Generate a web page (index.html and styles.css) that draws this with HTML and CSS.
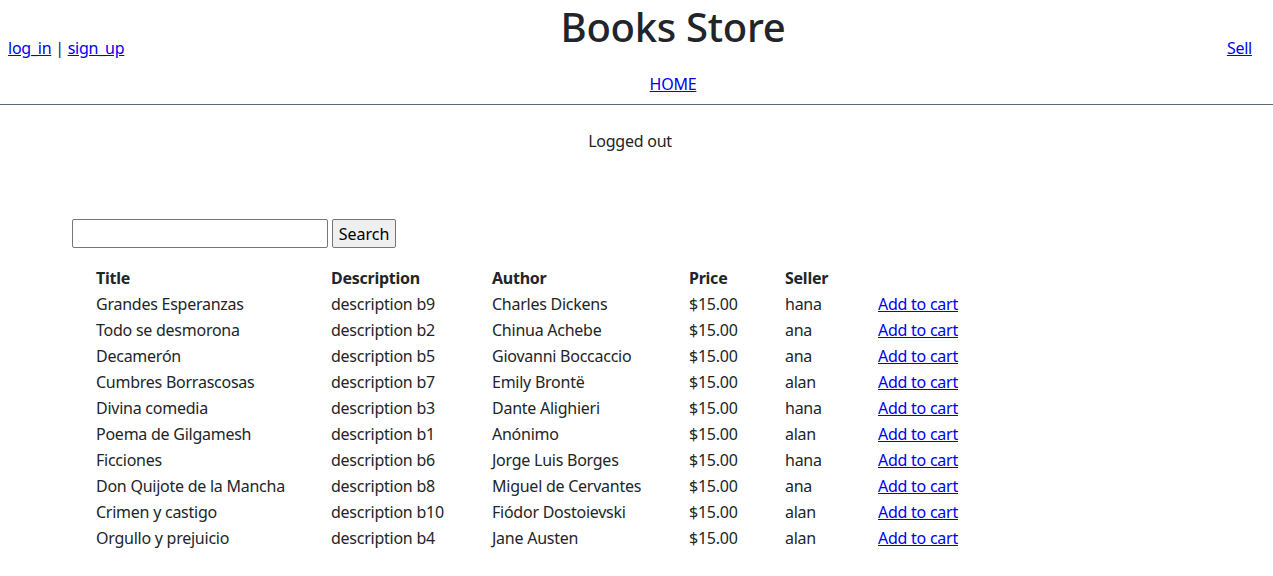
FILE: index.html
```html
<!DOCTYPE html>
<html lang="en">
<head>
<meta charset="utf-8">
<title>Books Store</title>
<link rel="stylesheet" href="styles.css">
</head>
<body>
<header class="top">
  <div class="auth"><a href="#">log_in</a> | <a href="#">sign_up</a></div>
  <div class="brand">
    <h1 class="title">Books Store</h1>
    <nav class="nav"><a href="#">HOME</a></nav>
  </div>
  <div class="sell"><a href="#">Sell</a></div>
</header>
<hr class="rule">
<main class="main">
  <p class="flash">Logged out</p>
  <form class="search">
    <input class="search-input" type="text">
    <button class="search-btn" type="button">Search</button>
  </form>
  <table class="books">
    <thead>
      <tr><th class="c1">Title</th><th class="c2">Description</th><th class="c3">Author</th><th class="c4">Price</th><th class="c5">Seller</th><th class="c6"></th></tr>
    </thead>
    <tbody>
      <tr><td>Grandes Esperanzas</td><td>description b9</td><td>Charles Dickens</td><td>$15.00</td><td>hana</td><td><a href="#">Add to cart</a></td></tr>
      <tr><td>Todo se desmorona</td><td>description b2</td><td>Chinua Achebe</td><td>$15.00</td><td>ana</td><td><a href="#">Add to cart</a></td></tr>
      <tr><td>Decamerón</td><td>description b5</td><td>Giovanni Boccaccio</td><td>$15.00</td><td>ana</td><td><a href="#">Add to cart</a></td></tr>
      <tr><td>Cumbres Borrascosas</td><td>description b7</td><td>Emily Brontë</td><td>$15.00</td><td>alan</td><td><a href="#">Add to cart</a></td></tr>
      <tr><td>Divina comedia</td><td>description b3</td><td>Dante Alighieri</td><td>$15.00</td><td>hana</td><td><a href="#">Add to cart</a></td></tr>
      <tr><td>Poema de Gilgamesh</td><td>description b1</td><td>Anónimo</td><td>$15.00</td><td>alan</td><td><a href="#">Add to cart</a></td></tr>
      <tr><td>Ficciones</td><td>description b6</td><td>Jorge Luis Borges</td><td>$15.00</td><td>hana</td><td><a href="#">Add to cart</a></td></tr>
      <tr><td>Don Quijote de la Mancha</td><td>description b8</td><td>Miguel de Cervantes</td><td>$15.00</td><td>ana</td><td><a href="#">Add to cart</a></td></tr>
      <tr><td>Crimen y castigo</td><td>description b10</td><td>Fiódor Dostoievski</td><td>$15.00</td><td>alan</td><td><a href="#">Add to cart</a></td></tr>
      <tr><td>Orgullo y prejuicio</td><td>description b4</td><td>Jane Austen</td><td>$15.00</td><td>alan</td><td><a href="#">Add to cart</a></td></tr>
    </tbody>
  </table>
</main>
</body>
</html>
```
FILE: styles.css
```css
html, body {
  margin: 0;
  padding: 0;
  background: #fff;
}
body {
  font-family: "Noto Sans", "Open Sans", sans-serif;
  font-size: 16px;
  line-height: 24px;
  letter-spacing: -0.25px;
  color: #212529;
}
a {
  color: #0000ee;
  text-decoration: underline;
}
.top {
  display: grid;
  grid-template-columns: 454px 422px 1fr;
  align-items: center;
  margin: 0 8px;
  height: 96px;
}
.auth {
  white-space: nowrap;
}
.brand {
  display: flex;
  flex-direction: column;
  align-items: center;
  white-space: nowrap;
}
.title {
  margin: 0 0 2px;
  font-size: 40px;
  line-height: 54px;
  font-weight: 500;
  letter-spacing: -0.3px;
}
.nav {
  padding-top: 16px;
}
.sell {
  justify-self: end;
  margin-right: 13px;
}
.rule {
  margin: 8px 0 0;
  border: 0;
  border-top: 1px solid #606a72;
  height: 0;
}
.main {
  margin-left: 72px;
  width: 1116px;
}
.flash {
  margin: 24px 0 0;
  text-align: center;
}
.search {
  display: flex;
  gap: 4px;
  margin-top: 66px;
  height: 29px;
}
.search-input {
  box-sizing: border-box;
  width: 256px;
  height: 29px;
  margin: 0;
  border: 1px solid #767676;
  border-radius: 2px;
  font: inherit;
}
.search-btn {
  box-sizing: border-box;
  width: 64px;
  height: 29px;
  margin: 0;
  padding: 0;
  border: 1px solid #767676;
  border-radius: 2px;
  background: #efefef;
  color: #000;
  font: inherit;
  line-height: 28px;
}
.books {
  margin: 17px 0 0 16px;
  border-collapse: collapse;
  table-layout: fixed;
}
.books th, .books td {
  padding: 1px 8px;
  text-align: left;
  white-space: nowrap;
  font-weight: 400;
}
.books th {
  font-weight: 700;
}
.c1 { width: 219px; }
.c2 { width: 145px; }
.c3 { width: 181px; }
.c4 { width: 80px; }
.c5 { width: 77px; }
.c6 { width: 80px; }
```
